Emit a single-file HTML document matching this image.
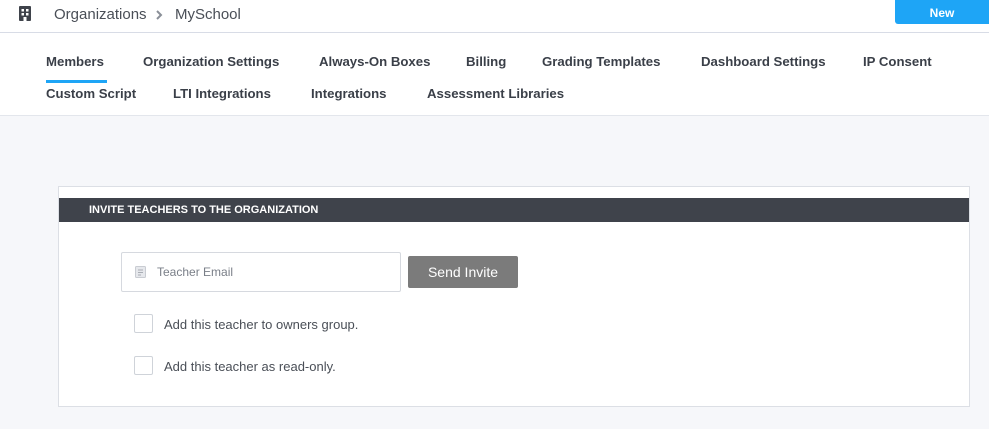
<!DOCTYPE html>
<html><head><style>
*{margin:0;padding:0;box-sizing:border-box}
body{width:989px;height:429px;overflow:hidden;background:#f6f7fa;font-family:"Liberation Sans",sans-serif;position:relative}
.top{position:absolute;left:0;top:0;width:989px;height:116px;background:#fff;border-bottom:1px solid #e3e6ec}
.hline{position:absolute;left:0;top:32px;width:989px;height:1px;background:#d8dce6}
.crumb{position:absolute;top:6px;font-size:15px;color:#4a4f57}
.new{position:absolute;left:895px;top:0;width:94px;height:24px;background:#1ea5f6;border-radius:0 0 0 3px;color:#fff;font-size:12px;font-weight:bold;text-align:center;line-height:26px}
.tab{position:absolute;font-size:13.2px;font-weight:bold;color:#3a3f48}
.card{position:absolute;left:58px;top:186px;width:912px;height:221px;background:#fff;border:1px solid #dcdfe5}
.bar{position:absolute;left:0;top:11px;width:910px;height:24px;background:#3f434b;color:#fff;font-size:11px;font-weight:bold;line-height:25px;padding-left:30px}
.inp{position:absolute;left:62px;top:65px;width:280px;height:40px;border:1px solid #d6d9df;border-radius:2px;font-size:12px;color:#7a7f88;line-height:38px;padding-left:35px}
.btn{position:absolute;left:349px;top:69px;width:110px;height:32px;background:#7b7b7b;border-radius:2px;color:#fff;font-size:14px;text-align:center;line-height:32px}
.cb{position:absolute;left:75px;width:19px;height:19px;border:1px solid #cfd3d9;border-radius:2px}
.lbl{position:absolute;left:105px;font-size:13px;color:#4a4f57}
</style></head><body>
<div class="top">
<svg style="position:absolute;left:18px;top:6px" width="14" height="15" viewBox="0 0 14 15"><rect x="1" y="0" width="12" height="15" rx="1" fill="#3f434b"/><rect x="3.5" y="3" width="2.5" height="2.5" fill="#fff"/><rect x="8" y="3" width="2.5" height="2.5" fill="#fff"/><rect x="3.5" y="7" width="2.5" height="2.5" fill="#fff"/><rect x="8" y="7" width="2.5" height="2.5" fill="#fff"/><rect x="5.5" y="11" width="3" height="4" fill="#fff"/></svg>
<div class="crumb" style="left:54px">Organizations</div>
<svg style="position:absolute;left:155px;top:10px" width="8" height="10" viewBox="0 0 8 10"><path d="M2 1l4 4-4 4" stroke="#8a8f98" stroke-width="2" fill="none"/></svg>
<div class="crumb" style="left:175px">MySchool</div>
<div class="hline"></div>
<div class="new">New</div>
<div class="tab" style="left:46px;top:54px">Members</div>
<div style="position:absolute;left:46px;top:80px;width:61px;height:3px;background:#1ea5f6"></div>
<div class="tab" style="left:143px;top:54px">Organization Settings</div>
<div class="tab" style="left:319px;top:54px">Always-On Boxes</div>
<div class="tab" style="left:466px;top:54px">Billing</div>
<div class="tab" style="left:542px;top:54px">Grading Templates</div>
<div class="tab" style="left:701px;top:54px">Dashboard Settings</div>
<div class="tab" style="left:863px;top:54px">IP Consent</div>
<div class="tab" style="left:46px;top:86px">Custom Script</div>
<div class="tab" style="left:173px;top:86px">LTI Integrations</div>
<div class="tab" style="left:311px;top:86px">Integrations</div>
<div class="tab" style="left:427px;top:86px">Assessment Libraries</div>
</div>
<div class="card">
<div class="bar">INVITE TEACHERS TO THE ORGANIZATION</div>
<div class="inp">Teacher Email<svg style="position:absolute;left:13px;top:13px" width="11" height="12" viewBox="0 0 11 12"><rect x="0.5" y="0.5" width="10" height="11" rx="1" fill="#e6e8ec" stroke="#c9ccd2"/><path d="M3 4h5M3 6.5h5M3 9h3" stroke="#a9adb4"/></svg></div>
<div class="btn">Send Invite</div>
<div class="cb" style="top:127px"></div><div class="lbl" style="top:130px">Add this teacher to owners group.</div>
<div class="cb" style="top:169px"></div><div class="lbl" style="top:172px">Add this teacher as read-only.</div>
</div>
</body></html>
